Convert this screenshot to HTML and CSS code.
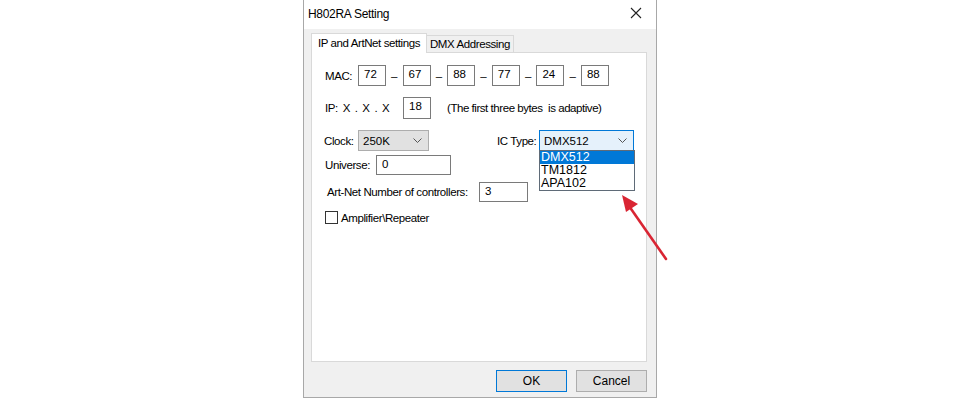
FILE: index.html
```html
<!DOCTYPE html>
<html>
<head>
<meta charset="utf-8">
<title>H802RA Setting</title>
<link rel="stylesheet" href="styles.css">
</head>
<body>
<div class="dialog">
  <div class="titlebar">
    <span class="title">H802RA Setting</span>
    <svg class="close" width="12" height="12" viewBox="0 0 12 12"><path d="M1 1L11 11M11 1L1 11" stroke="#222" stroke-width="1.1" fill="none"/></svg>
  </div>
  <div class="body">
    <div class="tabs">
      <div class="tab active">IP and ArtNet settings</div>
      <div class="tab">DMX Addressing</div>
    </div>
    <div class="panel">
      <div class="row mac">
        <span class="lbl mac-lbl">MAC:</span>
        <span class="box oct">72</span><span class="dash">–</span>
        <span class="box oct">67</span><span class="dash">–</span>
        <span class="box oct">88</span><span class="dash">–</span>
        <span class="box oct">77</span><span class="dash">–</span>
        <span class="box oct">24</span><span class="dash">–</span>
        <span class="box oct">88</span>
      </div>
      <div class="row ip">
        <span class="lbl ip-lbl">IP: X . X . X</span>
        <span class="box oct tall">18</span>
        <span class="note">(The first three bytes&nbsp; is adaptive)</span>
      </div>
      <div class="row clock">
        <span class="lbl clock-lbl">Clock:</span>
        <span class="combo gray">250K<svg class="chev" width="9" height="5" viewBox="0 0 9 5"><path d="M0.5 0.5L4.5 4.5L8.5 0.5" stroke="#555" fill="none"/></svg></span>
        <span class="lbl ic-lbl">IC Type:</span>
        <span class="combo open">DMX512<svg class="chev" width="9" height="5" viewBox="0 0 9 5"><path d="M0.5 0.5L4.5 4.5L8.5 0.5" stroke="#555" fill="none"/></svg></span>
      </div>
      <div class="row universe">
        <span class="lbl uni-lbl">Universe:</span>
        <span class="box uni">0</span>
      </div>
      <div class="row artnet">
        <span class="lbl art-lbl">Art-Net Number of controllers:</span>
        <span class="box cnt">3</span>
      </div>
      <div class="row check">
        <span class="checkbox"></span>
        <span class="lbl">Amplifier\Repeater</span>
      </div>
      <ul class="droplist">
        <li class="sel">DMX512</li>
        <li>TM1812</li>
        <li>APA102</li>
      </ul>
    </div>
    <div class="buttons">
      <span class="btn default">OK</span>
      <span class="btn">Cancel</span>
    </div>
  </div>
</div>
<svg class="arrow" width="60" height="80" viewBox="0 0 60 80">
  <line x1="50" y1="73" x2="13" y2="20" stroke="#d92533" stroke-width="2.6" stroke-linecap="round"/>
  <polygon points="6,9 22,18 10,26" fill="#d92533"/>
</svg>
</body>
</html>
```

FILE: styles.css
```css
html, body {
  margin: 0;
  padding: 0;
  background: #ffffff;
}

body {
  width: 960px;
  height: 400px;
  position: relative;
  overflow: hidden;
  font-family: "Liberation Sans", Arial, sans-serif;
  font-size: 11.5px;
  color: #000;
}

.dialog {
  margin-left: 303px;
  width: 354px;
  height: 398px;
  box-sizing: border-box;
  border: 1px solid #a8a8a8;
  border-top: none;
  background: #f0f0f0;
}

.titlebar {
  height: 29px;
  background: #fff;
  display: flex;
  align-items: center;
  padding-left: 4px;
}

.title {
  font-size: 12px;
  letter-spacing: -0.3px;
  margin-top: -2px;
}

.close {
  margin-left: auto;
  margin-right: 14px;
  margin-top: -4px;
}

.body {
  padding: 4px 8px 0 7px;
}

.tabs {
  display: flex;
  align-items: flex-end;
  height: 19px;
  letter-spacing: -0.4px;
}

.tab {
  box-sizing: border-box;
  height: 17px;
  border: 1px solid #d9d9d9;
  border-bottom: none;
  background: #f0f0f0;
  text-align: center;
  line-height: 16px;
  width: 88px;
  margin-left: -1px;
}

.tab.active {
  position: relative;
  z-index: 1;
  height: 20px;
  width: 116px;
  margin-left: 0;
  margin-bottom: -1px;
  background: #fff;
  line-height: 18px;
}

.panel {
  position: relative;
  box-sizing: border-box;
  width: 336px;
  height: 310px;
  border: 1px solid #d9d9d9;
  background: #fff;
  padding-left: 13px;
}

.row {
  display: flex;
  align-items: center;
}

.lbl {
  white-space: nowrap;
  letter-spacing: -0.4px;
}

.box {
  box-sizing: border-box;
  height: 21px;
  border: 1px solid #7a7a7a;
  background: #fff;
  padding: 2px 0 0 5px;
  line-height: 13px;
  align-self: flex-start;
}

.oct {
  width: 28px;
}

.dash {
  width: 16.6px;
  text-align: center;
}

.mac {
  margin-top: 12px;
}

.mac-lbl {
  width: 33px;
}

.ip {
  margin-top: 11px;
}

.ip .tall {
  height: 22px;
}

.ip-lbl {
  width: 78px;
  word-spacing: 2px;
}

.note {
  margin-left: 16px;
  letter-spacing: -0.45px;
}

.clock {
  margin-top: 11px;
}

.clock-lbl {
  width: 34px;
  margin-left: -1px;
}

.combo {
  box-sizing: border-box;
  height: 21px;
  display: flex;
  align-items: center;
  padding-left: 4px;
  border: 1px solid #adadad;
  background: #e1e1e1;
}

.combo.gray {
  width: 71px;
}

.combo.open {
  width: 95px;
  border-color: #0078d7;
  background: #e5f1fb;
}

.chev {
  margin-left: auto;
  margin-right: 6px;
}

.ic-lbl {
  margin-left: 68px;
  width: 42px;
}

.universe {
  margin-top: 4px;
}

.uni-lbl {
  width: 51px;
}

.box.uni {
  width: 75px;
  height: 20px;
}

.artnet {
  margin-top: 7px;
}

.art-lbl {
  width: 152px;
  margin-left: 2px;
}

.box.cnt {
  width: 49px;
  height: 20px;
}

.check {
  margin-top: 9px;
}

.checkbox {
  box-sizing: border-box;
  width: 13px;
  height: 13px;
  border: 1px solid #333;
  background: #fff;
  margin-right: 3px;
}

.droplist {
  position: absolute;
  left: 227px;
  top: 97px;
  width: 96px;
  height: 41px;
  box-sizing: border-box;
  margin: 0;
  padding: 0;
  list-style: none;
  border: 1px solid #5f6b78;
  background: #fff;
  font-size: 12.5px;
  line-height: 13px;
}

.droplist li {
  padding-left: 1px;
  height: 13px;
}

.droplist li.sel {
  background: #0078d7;
  color: #fff;
}

.buttons {
  display: flex;
  justify-content: flex-end;
  gap: 9px;
  margin-top: 8px;
  width: 336px;
}

.btn {
  box-sizing: border-box;
  width: 71px;
  height: 22px;
  border: 1px solid #adadad;
  background: #e1e1e1;
  text-align: center;
  line-height: 20px;
  font-size: 12px;
}

.btn.default {
  border-color: #0078d7;
}

.arrow {
  position: absolute;
  left: 616px;
  top: 186px;
}
```
